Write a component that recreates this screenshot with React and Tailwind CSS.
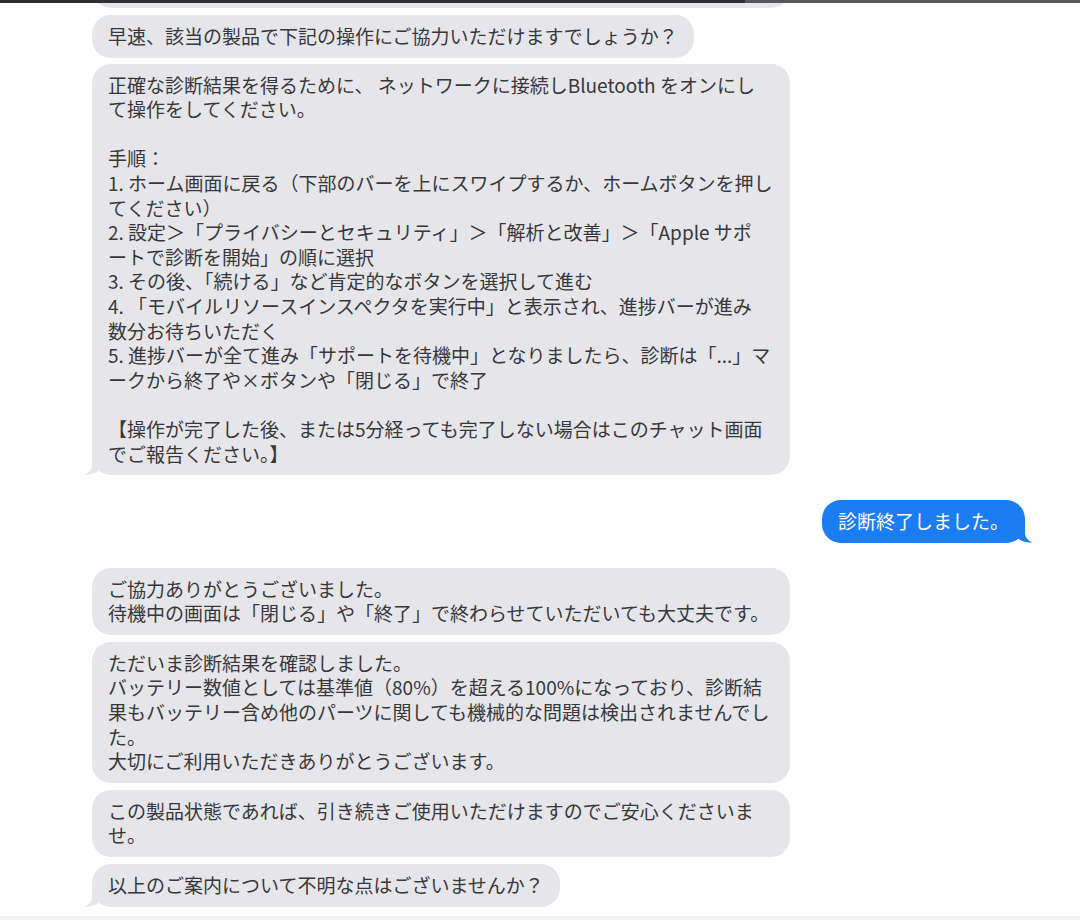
import React from "react";

const font = { fontFamily: '"Noto Sans CJK JP", "Noto Sans", sans-serif' };

function TailLeft() {
  return (
    <svg
      className="absolute left-[-8px] bottom-0"
      width="26"
      height="22"
      viewBox="0 0 26 22"
      aria-hidden="true"
    >
      <path
        d="M8 0 L8 12 C8 16.5 5 19.5 0.5 21.5 C6 22 11.5 20.5 15 17.5 C17.5 19.5 21 21 26 21.5 L26 0 Z"
        fill="#e5e5ea"
      />
    </svg>
  );
}

function TailRight() {
  return (
    <svg
      className="absolute right-[-8px] bottom-0"
      width="26"
      height="22"
      viewBox="0 0 26 22"
      aria-hidden="true"
    >
      <path
        d="M18 0 L18 12 C18 16.5 21 19.5 25.5 21.5 C20 22 14.5 20.5 11 17.5 C8.5 19.5 5 21 0 21.5 L0 0 Z"
        fill="#1b7cf4"
      />
    </svg>
  );
}

function Bubble({ children, wide, tail }) {
  return (
    <div
      className={
        "relative self-start rounded-[19px] bg-[#e5e5ea] px-4 py-[9px] text-[19px] leading-[24.6px] text-[#38383a] whitespace-pre-line " +
        (wide ? "w-[698px]" : "")
      }
    >
      {tail && <TailLeft />}
      <span className="relative">{children}</span>
    </div>
  );
}

export default function App() {
  return (
    <div
      className="relative w-[1080px] h-[920px] overflow-hidden bg-white"
      style={font}
    >
      <div className="absolute top-0 left-0 right-0 h-[3px] flex z-10">
        <div className="w-[745px] bg-[#2e2e30]" />
        <div className="flex-1 bg-[#58585a]" />
      </div>
      <div className="flex flex-col pl-[92px] pr-[55px]">
        <div className="mt-[-32px] h-[40px] w-[698px] rounded-[19px] bg-[#e5e5ea]" />

        <div className="mt-[7px] flex flex-col gap-[6px]">
          <Bubble>早速、該当の製品で下記の操作にご協力いただけますでしょうか？</Bubble>
          <Bubble wide tail>
            {"正確な診断結果を得るために、 ネットワークに接続しBluetooth をオンにし\nて操作をしてください。\n\n手順：\n1. ホーム画面に戻る（下部のバーを上にスワイプするか、ホームボタンを押し\nてください）\n2. 設定＞「プライバシーとセキュリティ」＞「解析と改善」＞「Apple サポ\nートで診断を開始」の順に選択\n3. その後、「続ける」など肯定的なボタンを選択して進む\n4. 「モバイルリソースインスペクタを実行中」と表示され、進捗バーが進み\n数分お待ちいただく\n5. 進捗バーが全て進み「サポートを待機中」となりましたら、診断は「...」マ\nークから終了や×ボタンや「閉じる」で終了\n\n【操作が完了した後、または5分経っても完了しない場合はこのチャット画面\nでご報告ください。】"}
          </Bubble>
        </div>

        <div className="mt-[25px] self-end relative rounded-[19px] bg-[#1b7cf4] px-4 py-[9px] text-[19px] leading-[24.6px] text-white">
          <TailRight />
          <span className="relative">診断終了しました。</span>
        </div>

        <div className="mt-[25px] flex flex-col gap-[7px]">
          <Bubble wide>
            {"ご協力ありがとうございました。\n待機中の画面は「閉じる」や「終了」で終わらせていただいても大丈夫です。"}
          </Bubble>
          <Bubble wide>
            {"ただいま診断結果を確認しました。\nバッテリー数値としては基準値（80%）を超える100%になっており、診断結\n果もバッテリー含め他のパーツに関しても機械的な問題は検出されませんでし\nた。\n大切にご利用いただきありがとうございます。"}
          </Bubble>
          <Bubble wide>
            {"この製品状態であれば、引き続きご使用いただけますのでご安心くださいま\nせ。"}
          </Bubble>
          <Bubble tail>以上のご案内について不明な点はございませんか？</Bubble>
        </div>
      </div>
      <div className="absolute bottom-0 left-0 right-0 h-[4px] bg-[#f2f2f2]" />
    </div>
  );
}
